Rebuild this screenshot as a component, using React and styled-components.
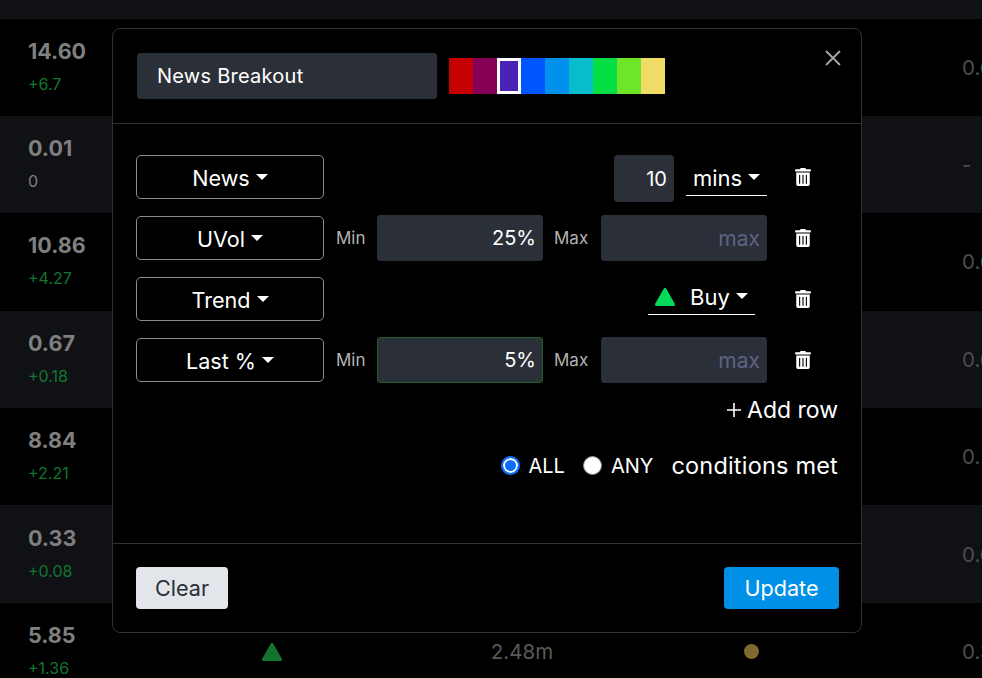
import React from "react";
import styled, { createGlobalStyle } from "styled-components";
import { FaTrashAlt } from "react-icons/fa";

const GlobalStyle = createGlobalStyle`
  html, body {
    margin: 0;
    height: 100%;
    overflow: hidden;
    background: #000;
    font-family: Inter, "Liberation Sans", sans-serif;
  }
  * { box-sizing: border-box; }
`;

const Page = styled.div`
  position: relative;
  width: 982px;
  height: 678px;
  overflow: hidden;
`;

const TableHead = styled.div`
  height: 18.5px;
  background: #0f1114;
`;

const TableRow = styled.div`
  display: grid;
  grid-template-columns: 214px 60px 440px 18px 1fr;
  align-items: center;
  height: 97.4px;
  padding-left: 28px;
  background: ${(p) => (p.$striped ? "#0f1114" : "#000")};
`;

const PriceCell = styled.div`
  display: flex;
  flex-direction: column;
  gap: 10px;
  margin-top: 1px;
`;

const Price = styled.div`
  font-size: 21.5px;
  line-height: 23px;
  font-weight: 700;
  color: #7f7f7f;
`;

const Change = styled.div`
  font-size: 16px;
  line-height: 23px;
  color: ${(p) => (p.$flat ? "#7f7f7f" : "#13752f")};
`;

const CenterCell = styled.div`
  display: flex;
  justify-content: center;
  font-size: 20.5px;
  color: #595959;
`;

const Dot = styled.span`
  width: 15px;
  height: 15px;
  border-radius: 50%;
  background: #7f6a2e;
`;

const LastCell = styled.div`
  padding-left: 202px;
  font-size: 20.5px;
  color: #4d4d4d;
  white-space: nowrap;
`;

const Modal = styled.div`
  position: absolute;
  left: 112px;
  top: 28px;
  width: 750px;
  height: 605px;
  display: flex;
  flex-direction: column;
  background: #000;
  border: 1px solid #2f3133;
  border-radius: 8px;
  color: #fff;
`;

const ModalHeader = styled.div`
  display: flex;
  align-items: center;
  padding: 24px 20px 24px 24px;
  border-bottom: 1px solid #2f3133;
`;

const TextField = styled.div`
  display: flex;
  align-items: center;
  justify-content: ${(p) => (p.$left ? "flex-start" : "flex-end")};
  width: ${(p) => p.$width}px;
  height: ${(p) => (p.$tall ? "47px" : "46px")};
  padding: 0 ${(p) => (p.$left ? "19px" : "6px")};
  flex: none;
  background: #2b3038;
  border: 1px solid ${(p) => (p.$valid ? "#1d5c2a" : "#2b3038")};
  border-radius: 3px;
  font-size: ${(p) => (p.$placeholder ? "21px" : "20px")};
  letter-spacing: ${(p) => (p.$left ? "0.25px" : "0")};
  color: ${(p) => (p.$placeholder ? "#5d6285" : "#fff")};
`;

const Swatches = styled.div`
  display: flex;
  margin-left: 12px;
`;

const Swatch = styled.div`
  width: 24px;
  height: 36px;
  background: ${(p) => p.$color};
  border: ${(p) => (p.$selected ? "3px solid #fff" : "none")};
`;

const CloseButton = styled.button`
  display: flex;
  margin: -37px 0 0 auto;
  padding: 0;
  border: none;
  background: none;
`;

const ModalBody = styled.div`
  flex: 1;
  padding: 31px 23px 0;
`;

const FilterRow = styled.div`
  display: flex;
  align-items: ${(p) => (p.$first ? "flex-start" : "center")};
  height: 46px;
  margin-bottom: ${(p) => (p.$first ? "14px" : "15px")};
`;

const DropdownButton = styled.button`
  display: flex;
  align-items: center;
  justify-content: center;
  width: 188px;
  height: 44px;
  flex: none;
  padding: 2px 0 0;
  background: #000;
  border: 1px solid #8c8c8c;
  border-radius: 5px;
  font: inherit;
  font-size: 21.6px;
  color: #fff;
`;

const Caret = styled.span`
  display: inline-block;
  margin-left: 6px;
  margin-top: -3px;
  border-top: 6px solid #fff;
  border-left: 6px solid transparent;
  border-right: 6px solid transparent;
`;

const Fields = styled.div`
  display: flex;
  align-items: ${(p) => (p.$first ? "flex-start" : "center")};
  justify-content: flex-end;
  width: 431px;
  margin-left: 12px;
`;

const FieldLabel = styled.span`
  font-size: 17px;
  color: #b3b3b3;
  margin-right: 12px;
  width: 29px;
  flex: none;
  white-space: nowrap;
`;

const MaxLabel = styled(FieldLabel)`
  width: 35px;
  margin-left: 11px;
`;

const UnderlineSelect = styled.div`
  display: flex;
  align-items: center;
  justify-content: center;
  width: ${(p) => p.$width}px;
  height: 32px;
  margin-left: 12px;
  margin-top: ${(p) => (p.$first ? "9px" : "0")};
  margin-right: ${(p) => (p.$first ? "0" : "12px")};
  padding-bottom: 3px;
  border-bottom: 1px solid #fff;
  font-size: 22px;
`;

const TrashButton = styled.button`
  display: flex;
  margin-left: 27px;
  margin-top: ${(p) => (p.$first ? "13px" : "0")};
  padding: 0;
  background: none;
  border: none;
  color: #fff;
`;

const AddRow = styled.div`
  display: flex;
  justify-content: flex-end;
  align-items: center;
  gap: 6px;
  height: 24px;
  font-size: 23px;
`;

const Conditions = styled.div`
  display: flex;
  justify-content: flex-end;
  align-items: center;
  height: 24px;
  margin-top: 31px;
  font-size: 23.5px;
  letter-spacing: 0.2px;
`;

const RadioLabel = styled.label`
  display: flex;
  align-items: center;
  gap: 9px;
  margin-right: 18px;
  font-size: 20px;
  letter-spacing: 0;
`;

const RadioText = styled.span`
  padding-top: 2px;
`;

const Radio = styled.input`
  appearance: none;
  width: 19px;
  height: 19px;
  margin: 0;
  border-radius: 50%;
  background: #fff;
  border: 1px solid #8c8c8c;

  &:checked {
    background: #0d6efd;
    border: 2px solid #0d6efd;
    box-shadow: inset 0 0 0 2px #fff;
  }
`;

const ModalFooter = styled.div`
  display: flex;
  justify-content: space-between;
  padding: 23px 22px 23px 23px;
  border-top: 1px solid #2f3133;
`;

const FooterButton = styled.button`
  width: ${(p) => p.$width}px;
  height: 42px;
  padding: 0;
  border: none;
  border-radius: 4px;
  font: inherit;
  font-size: 21.6px;
  background: ${(p) => (p.$primary ? "#0090e8" : "#e2e6ea")};
  color: ${(p) => (p.$primary ? "#fff" : "#2b3035")};
`;

const BuyGap = styled.span`
  width: 15px;
`;

const Triangle = ({ color }) => (
  <svg width="20" height="18" viewBox="0 0 20 18">
    <path d="M10 1.5 L18.5 16.5 H1.5 Z" fill={color} stroke={color} strokeWidth="3" strokeLinejoin="round" />
  </svg>
);

const rows = [
  { price: "14.60", change: "+6.7", last: "0.64" },
  { price: "0.01", change: "0", flat: true, last: "-" },
  { price: "10.86", change: "+4.27", last: "0.62" },
  { price: "0.67", change: "+0.18", last: "0.06" },
  { price: "8.84", change: "+2.21", last: "0.25" },
  { price: "0.33", change: "+0.08", last: "0.05" },
  { price: "5.85", change: "+1.36", last: "0.31", volume: "2.48m" },
];

const colors = ["#c40000", "#870058", "#4a22b8", "#0055ff", "#0090ee", "#06bccd", "#04de44", "#6ee526", "#efdc66"];

const Trash = ({ first }) => (
  <TrashButton $first={first}>
    <FaTrashAlt size={18} />
  </TrashButton>
);

const Dropdown = ({ label }) => (
  <DropdownButton>
    {label}
    <Caret />
  </DropdownButton>
);

const RangeFields = ({ min, valid }) => (
  <Fields>
    <FieldLabel>Min</FieldLabel>
    <TextField $width={166} $valid={valid}>{min}</TextField>
    <MaxLabel>Max</MaxLabel>
    <TextField $width={166} $placeholder>max</TextField>
  </Fields>
);

export default function App() {
  return (
    <Page>
      <GlobalStyle />
      <TableHead />
      {rows.map((row, i) => (
        <TableRow key={row.price} $striped={i % 2 === 1}>
          <PriceCell>
            <Price>{row.price}</Price>
            <Change $flat={row.flat}>{row.change}</Change>
          </PriceCell>
          <CenterCell>{row.volume && <Triangle color="#12722f" />}</CenterCell>
          <CenterCell>{row.volume}</CenterCell>
          <CenterCell>{row.volume && <Dot />}</CenterCell>
          <LastCell>{row.last}</LastCell>
        </TableRow>
      ))}
      <Modal>
        <ModalHeader>
          <TextField $width={300} $left>News Breakout</TextField>
          <Swatches>
            {colors.map((color, i) => (
              <Swatch key={color} $color={color} $selected={i === 2} />
            ))}
          </Swatches>
          <CloseButton>
            <svg width="16" height="16" viewBox="0 0 16 16">
              <path d="M1 1 L15 15 M15 1 L1 15" stroke="#a6a6a6" strokeWidth="1.8" />
            </svg>
          </CloseButton>
        </ModalHeader>
        <ModalBody>
          <FilterRow $first>
            <Dropdown label="News" />
            <Fields $first>
              <TextField $width={60} $tall>10</TextField>
              <UnderlineSelect $width={81} $first>
                mins
                <Caret />
              </UnderlineSelect>
            </Fields>
            <Trash first />
          </FilterRow>
          <FilterRow>
            <Dropdown label="UVol" />
            <RangeFields min="25%" />
            <Trash />
          </FilterRow>
          <FilterRow>
            <Dropdown label="Trend" />
            <Fields>
              <UnderlineSelect $width={107}>
                <Triangle color="#04d95c" />
                <BuyGap />
                Buy
                <Caret />
              </UnderlineSelect>
            </Fields>
            <Trash />
          </FilterRow>
          <FilterRow>
            <Dropdown label="Last %" />
            <RangeFields min="5%" valid />
            <Trash />
          </FilterRow>
          <AddRow>
            <svg width="14" height="14" viewBox="0 0 14 14">
              <path d="M7 0 V14 M0 7 H14" stroke="#fff" strokeWidth="1.6" />
            </svg>
            Add row
          </AddRow>
          <Conditions>
            <RadioLabel>
              <Radio type="radio" name="match" defaultChecked />
              <RadioText>ALL</RadioText>
            </RadioLabel>
            <RadioLabel>
              <Radio type="radio" name="match" />
              <RadioText>ANY</RadioText>
            </RadioLabel>
            conditions met
          </Conditions>
        </ModalBody>
        <ModalFooter>
          <FooterButton $width={92}>Clear</FooterButton>
          <FooterButton $width={115} $primary>Update</FooterButton>
        </ModalFooter>
      </Modal>
    </Page>
  );
}
